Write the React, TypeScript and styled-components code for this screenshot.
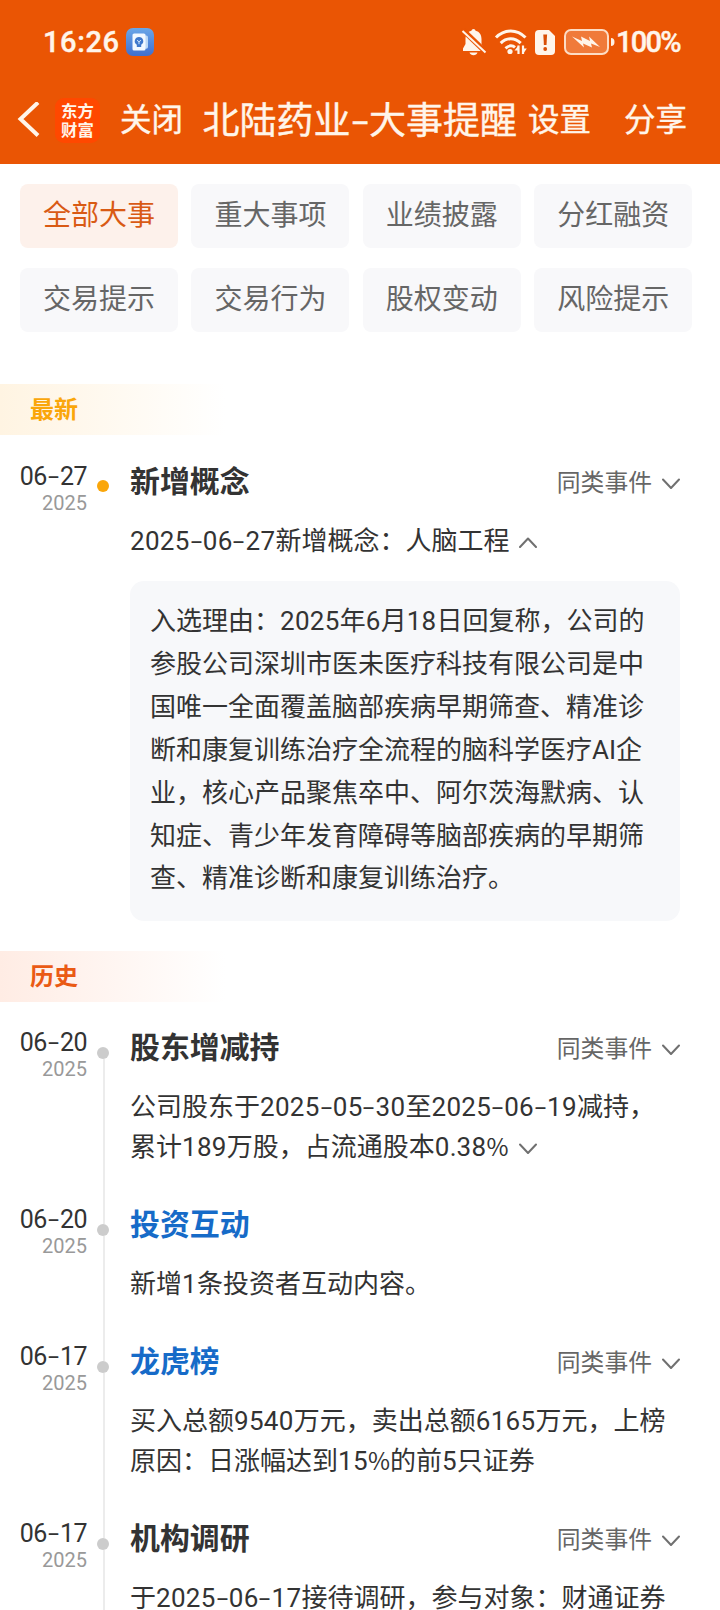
import React from "react";
import styled, { createGlobalStyle } from "styled-components";

const Global = createGlobalStyle`
  * { box-sizing: border-box; }
  html, body { margin: 0; padding: 0; background: #fff; }
  body { width: 720px; height: 1610px; overflow: hidden; }
`;

const Screen = styled.main`
  width: 720px;
  height: 1610px;
  overflow: hidden;
  background: #fff;
  color: #333;
  font-family: Roboto, "Noto Sans CJK SC", sans-serif;
`;

const Header = styled.header`
  height: 164px;
  background: #ea5504;
  color: #fff5ea;
  -webkit-text-stroke: 0.4px #fff5ea;
`;

const StatusBar = styled.div`
  height: 84px;
  display: flex;
  align-items: center;
  padding: 0 38px 0 43px;
`;

const Clock = styled.span`
  width: 76px;
  font-size: 29px;
  font-weight: 500;
  letter-spacing: 0.6px;
  white-space: nowrap;
`;

const StatusIcons = styled.div`
  margin-left: auto;
  display: flex;
  align-items: center;
`;

const SignalIcons = styled.div`
  display: flex;
  align-items: center;
  gap: 7px;
  margin-right: 9px;
`;

const Percent = styled.span`
  width: 66px;
  margin-left: 1px;
  font-size: 29px;
  font-weight: 500;
  letter-spacing: -1.7px;
  white-space: nowrap;
`;

const NavBar = styled.nav`
  height: 74px;
  display: flex;
  align-items: center;
  padding-left: 17px;
`;

const Brand = styled.div`
  width: 45px;
  height: 45px;
  margin: 0 20px 2px 15px;
  border-radius: 9px;
  background: #ff4800;
  display: flex;
  align-items: center;
  justify-content: center;
  text-align: center;
  font-family: "Noto Sans CJK SC", sans-serif;
  font-size: 16.4px;
  font-weight: 700;
  line-height: 19.5px;
  -webkit-text-stroke: 0;
`;

const NavAction = styled.span<{ $gap?: number }>`
  font-size: 31.5px;
  line-height: 44px;
  white-space: nowrap;
  margin-left: ${(p) => p.$gap ?? 0}px;
`;

const PageTitle = styled.h1`
  margin: 2px 0 0 19.5px;
  width: 314.5px;
  font-size: 37px;
  font-weight: 400;
  line-height: 48px;
  white-space: nowrap;
`;

const Dash = styled.span<{ $slot: number }>`
  display: inline-block;
  width: ${(p) => p.$slot}em;
  text-align: center;
  & > i {
    display: inline-block;
    font-style: normal;
    transform: scale(1.6, 0.9);
  }
`;

const Digits = styled.span`
  letter-spacing: 0.012em;
`;

const PercentSign = styled.span`
  font-family: "Noto Sans CJK SC", sans-serif;
  font-size: 0.92em;
  line-height: 1;
`;

const Filters = styled.div`
  display: grid;
  grid-template-columns: repeat(4, 158px);
  column-gap: 13.4px;
  row-gap: 20px;
  padding: 20px 0 0 20px;
  height: 220px;
  align-content: start;
`;

const Filter = styled.button<{ $active?: boolean }>`
  height: 64px;
  padding: 0 0 6px;
  border: 0;
  border-radius: 8px;
  background: ${(p) => (p.$active ? "#fdf1eb" : "#f8f8fa")};
  color: ${(p) => (p.$active ? "#d95a14" : "#666")};
  font: 400 28px/40px "Noto Sans CJK SC", sans-serif;
`;

const Band = styled.h2<{ $tone: "new" | "past" }>`
  margin: 0;
  height: 51px;
  padding-left: 30px;
  font-size: 24px;
  font-weight: 700;
  line-height: 52px;
  color: ${(p) => (p.$tone === "new" ? "#faa60a" : "#ea5a14")};
  background: linear-gradient(
    to right,
    ${(p) => (p.$tone === "new" ? "#fff4e2" : "#ffece4")},
    #fff 225px
  );
`;

const Timeline = styled.section<{ $top: number; $bottom?: number }>`
  padding: ${(p) => p.$top}px 40px ${(p) => p.$bottom ?? 0}px 0;
`;

const Item = styled.article`
  display: grid;
  grid-template-columns: 87px 32px 1fr;
`;

const When = styled.div`
  padding-top: 2px;
  text-align: right;
  white-space: nowrap;
`;

const Day = styled.div`
  font-size: 25px;
  line-height: 28px;
  letter-spacing: -0.6px;
`;

const Year = styled.div`
  font-size: 20px;
  line-height: 25px;
  color: #999;
`;

const Rail = styled.div`
  display: flex;
  flex-direction: column;
  align-items: center;
`;

const Segment = styled.div<{ $visible: boolean; $length?: number }>`
  width: 2px;
  margin-left: 2px;
  ${(p) => (p.$length ? `height: ${p.$length}px;` : "flex: 1;")}
  background: ${(p) => (p.$visible ? "#ececec" : "transparent")};
`;

const Dot = styled.div<{ $fresh?: boolean }>`
  width: 12px;
  height: 12px;
  border-radius: 50%;
  background: ${(p) => (p.$fresh ? "#faa60a" : "#ccc")};
`;

const Content = styled.div<{ $last?: boolean }>`
  padding: 0 0 ${(p) => (p.$last ? 0 : 37)}px 11px;
`;

const Heading = styled.div`
  height: 40px;
  display: flex;
  align-items: center;
  justify-content: space-between;
`;

const Title = styled.h3<{ $link?: boolean }>`
  margin: 2px 0 0;
  font-size: 29.9px;
  font-weight: 700;
  line-height: 40px;
  color: ${(p) => (p.$link ? "#166bc8" : "#333")};
`;

const Similar = styled.span`
  display: flex;
  align-items: center;
  gap: 10px;
  margin-top: 4px;
  font-size: 23.8px;
  line-height: 40px;
  color: #666;
`;

const Body = styled.p`
  margin: 20px 0 0;
  font-size: 26px;
  line-height: 40px;
  white-space: nowrap;
  svg {
    margin: 0 0 2px 10px;
  }
`;

const Reason = styled.div`
  margin-top: 20px;
  height: 340px;
  padding: 19px 20px;
  border-radius: 14px;
  background: #f7f8fa;
  font-size: 26px;
  line-height: 42.9px;
  white-space: nowrap;
`;

function Text({ children, slot = 0.5 }: { children: string; slot?: number }) {
  return (
    <>
      {children.split(/(-|%|\d+)/).map((part, i) => {
        if (part === "-") return <Dash key={i} $slot={slot}><i>-</i></Dash>;
        if (part === "%") return <PercentSign key={i}>%</PercentSign>;
        if (/^\d/.test(part)) return <Digits key={i}>{part}</Digits>;
        return <React.Fragment key={i}>{part}</React.Fragment>;
      })}
    </>
  );
}

function Lines({ lines }: { lines: string[] }) {
  return (
    <>
      {lines.map((line, i) => (
        <React.Fragment key={i}>
          {i > 0 && <br />}
          <Text>{line}</Text>
        </React.Fragment>
      ))}
    </>
  );
}

function Chevron({ up }: { up?: boolean }) {
  return (
    <svg width="18" height="11" viewBox="0 0 18 11" fill="none" stroke="#707070" strokeWidth="2" strokeLinecap="round" strokeLinejoin="round">
      <path d={up ? "M1 10 9 1.5 17 10" : "M1 1.5 9 10 17 1.5"} />
    </svg>
  );
}

const BadgeIcon = styled.svg`
  margin-left: 7px;
`;

function AppBadge() {
  return (
    <BadgeIcon width="28" height="28" viewBox="0 0 28 28">
      <defs>
        <linearGradient id="badge" x1="0" y1="0" x2="0" y2="1">
          <stop offset="0" stopColor="#6aa6e8" />
          <stop offset="1" stopColor="#3f6fcf" />
        </linearGradient>
      </defs>
      <rect width="28" height="28" rx="7" fill="url(#badge)" />
      <path d="M18 7.5h2.200q1.800 0 1.800 1.800v9.600q0 1.800-1.800 1.800H18z" fill="#bcd8f6" />
      <rect x="6.500" y="5.500" width="13" height="17" rx="1.600" fill="#f2f8ff" />
      <path d="M13 9a4.200 4.200 0 0 1 2.200 7.800V19h-4.400v-2.200A4.200 4.200 0 0 1 13 9z" fill="#3f78cc" />
      <path d="M11 12.200l2 1.600 2-1.600M13 13.800v2.400" stroke="#cfe3fa" strokeWidth="1" fill="none" />
    </BadgeIcon>
  );
}

function BellOff() {
  return (
    <svg width="26" height="28" viewBox="0 0 26 28" fill="#fff5ea">
      <path d="M12.5 1q1.8 0 2.1 1.8c4 1 5.9 4 5.9 8.200v5l2.500 4.500v2.500H2v-2.500l2.500-4.500v-5c0-4.200 2-7.200 5.900-8.200Q10.700 1 12.500 1z" />
      <path d="M8.500 24.500h8q-1 2.800-4 2.800t-4-2.800z" />
      <path d="M.5.800 26 25.300" stroke="#ea5504" strokeWidth="5.400" />
      <path d="M1.500 3 24.500 24.500" stroke="#fff5ea" strokeWidth="2" />
    </svg>
  );
}

function Wifi() {
  return (
    <svg width="34" height="28" viewBox="0 0 34 28" fill="none" stroke="#fff5ea" strokeWidth="3">
      <path d="M2 9.500C10.500.800 23 .800 31.500 9.500" />
      <path d="M6.700 15.200c6-5.800 14-5.800 20 0" />
      <path d="M11.500 20.300c3.300-3.100 7-3.100 9.500-.9" />
      <circle cx="16" cy="23.500" r="2.600" fill="#fff5ea" stroke="none" />
      <path d="M24.500 17.500v8.500M29 17.500v8.500" strokeWidth="2.200" />
      <path d="M20.500 22.500 24.500 17.500v5zM32.800 20.500 29 26V20.500z" fill="#fff5ea" stroke="none" />
    </svg>
  );
}

function SimAlert() {
  return (
    <svg width="20" height="25" viewBox="0 0 20 25">
      <path d="M4 0h10l6 6v15q0 4-4 4H4q-4 0-4-4V4q0-4 4-4z" fill="#fff5ea" />
      <path d="M8.300 4.500h3.800l-.6 10.500H8.900z" fill="#d94e04" />
      <circle cx="10.200" cy="19" r="1.900" fill="#d94e04" />
    </svg>
  );
}

function Battery() {
  return (
    <svg width="51" height="26" viewBox="0 0 51 26">
      <rect x="1" y="1" width="43" height="24" rx="6" fill="#f07a3a" stroke="#fddcc4" strokeWidth="2" />
      <path d="M47 9q3.500 0 3.500 4T47 17z" fill="#fff0e2" />
      <path d="M8 7.500 18 12l-1-4.500 9 4.500-1-4.500L36 18l-9-3.500 1 4-9-4 1 4z" fill="#fff5ea" />
    </svg>
  );
}

type Event = { day: string; title: string; link?: boolean; similar: boolean; lines: string[]; more?: boolean };

const history: Event[] = [
  { day: "06-20", title: "股东增减持", similar: true, lines: ["公司股东于2025-05-30至2025-06-19减持，", "累计189万股，占流通股本0.38%"], more: true },
  { day: "06-20", title: "投资互动", link: true, similar: false, lines: ["新增1条投资者互动内容。"] },
  { day: "06-17", title: "龙虎榜", link: true, similar: true, lines: ["买入总额9540万元，卖出总额6165万元，上榜", "原因：日涨幅达到15%的前5只证券"] },
  { day: "06-17", title: "机构调研", similar: true, lines: ["于2025-06-17接待调研，参与对象：财通证券"] },
];

const filters = ["全部大事", "重大事项", "业绩披露", "分红融资", "交易提示", "交易行为", "股权变动", "风险提示"];

const reason = [
  "入选理由：2025年6月18日回复称，公司的",
  "参股公司深圳市医未医疗科技有限公司是中",
  "国唯一全面覆盖脑部疾病早期筛查、精准诊",
  "断和康复训练治疗全流程的脑科学医疗AI企",
  "业，核心产品聚焦卒中、阿尔茨海默病、认",
  "知症、青少年发育障碍等脑部疾病的早期筛",
  "查、精准诊断和康复训练治疗。",
];

function DateLabel({ day }: { day: string }) {
  const [month, date] = day.split("-");
  return (
    <When>
      <Day>{month}<Dash $slot={0.54}><i>-</i></Dash>{date}</Day>
      <Year>2025</Year>
    </When>
  );
}

function EventHeading({ title, link, similar }: { title: string; link?: boolean; similar: boolean }) {
  return (
    <Heading>
      <Title $link={link}>{title}</Title>
      {similar && <Similar>同类事件<Chevron /></Similar>}
    </Heading>
  );
}

export default function App() {
  return (
    <Screen>
      <Global />
      <Header>
        <StatusBar>
          <Clock>16:26</Clock>
          <AppBadge />
          <StatusIcons>
            <SignalIcons>
              <BellOff />
              <Wifi />
              <SimAlert />
            </SignalIcons>
            <Battery />
            <Percent>100%</Percent>
          </StatusIcons>
        </StatusBar>
        <NavBar>
          <svg width="23" height="38" viewBox="0 0 23 38" fill="none" stroke="#fff5ea" strokeWidth="4">
            <path d="M21 0.500 3.500 17 21 33.500" />
          </svg>
          <Brand>东方<br />财富</Brand>
          <NavAction>关闭</NavAction>
          <PageTitle><Text slot={0.5}>北陆药业-大事提醒</Text></PageTitle>
          <NavAction $gap={11}>设置</NavAction>
          <NavAction $gap={33}>分享</NavAction>
        </NavBar>
      </Header>
      <Filters>
        {filters.map((name, i) => <Filter key={name} $active={i === 0}>{name}</Filter>)}
      </Filters>
      <Band $tone="new">最新</Band>
      <Timeline $top={26} $bottom={30}>
        <Item>
          <DateLabel day="06-27" />
          <Rail>
            <Segment $visible={false} $length={19} />
            <Dot $fresh />
          </Rail>
          <Content $last>
            <EventHeading title="新增概念" similar />
            <Body><Text>2025-06-27新增概念：人脑工程</Text><Chevron up /></Body>
            <Reason><Lines lines={reason} /></Reason>
          </Content>
        </Item>
      </Timeline>
      <Band $tone="past">历史</Band>
      <Timeline $top={25}>
        {history.map((e, i) => (
          <Item key={i}>
            <DateLabel day={e.day} />
            <Rail>
              <Segment $visible={i > 0} $length={20} />
              <Dot />
              <Segment $visible />
            </Rail>
            <Content>
              <EventHeading title={e.title} link={e.link} similar={e.similar} />
              <Body><Lines lines={e.lines} />{e.more && <Chevron />}</Body>
            </Content>
          </Item>
        ))}
      </Timeline>
    </Screen>
  );
}
